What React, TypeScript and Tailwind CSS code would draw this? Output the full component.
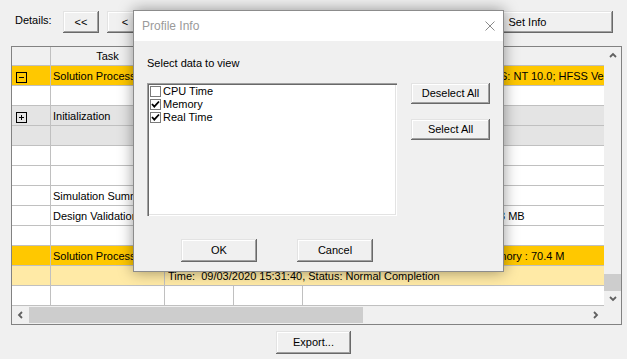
import type { ReactNode } from 'react'

const BTN =
  'flex items-center justify-center bg-[#f0f0f0] text-black shadow-[inset_-1px_-1px_#696969,inset_1px_1px_#e3e3e3,inset_-2px_-2px_#a0a0a0,inset_2px_2px_#ffffff]'

function Chevron({ dir }: { dir: 'up' | 'down' | 'left' | 'right' }) {
  const pts: Record<string, string> = {
    up: '1,5 4,2 7,5',
    down: '1,2 4,5 7,2',
    left: '5,1 2,4 5,7',
    right: '2,1 5,4 2,7',
  }
  return (
    <svg width="8" height="8" viewBox="0 0 8 8">
      <polyline points={pts[dir]} fill="none" stroke="#606060" strokeWidth="1.8" />
    </svg>
  )
}

function TreeBox({ plus }: { plus?: boolean }) {
  return (
    <svg width="11" height="11" viewBox="0 0 11 11" className="ml-[4px] mt-[6px]">
      <rect x="0.5" y="0.5" width="10" height="10" fill="none" stroke="#000" />
      <line x1="3" y1="5.5" x2="8" y2="5.5" stroke="#000" />
      {plus && <line x1="5.5" y1="3" x2="5.5" y2="8" stroke="#000" />}
    </svg>
  )
}

type Row = {
  bg: string
  box?: 'plus' | 'minus'
  task?: string
  // text spanning the right columns; pre = part hidden under the dialog
  pre?: string
  preW?: string
  text?: string
}

const ROWS: Row[] = [
  { bg: 'bg-[#ffc800]', box: 'minus', task: 'Solution Process', pre: 'Host: LOCALHOST, Cores: 4, Distributed: No, O', preW: 'w-[332px]', text: 'S: NT 10.0; HFSS Version 2020.1.0' },
  { bg: 'bg-white' },
  { bg: 'bg-[#e4e4e4]', box: 'plus', task: 'Initialization' },
  { bg: 'bg-[#e4e4e4]' },
  { bg: 'bg-white' },
  { bg: 'bg-white' },
  { bg: 'bg-white', task: 'Simulation Summary' },
  { bg: 'bg-white', task: 'Design Validation', pre: 'Elapsed Time: 00:00:01, Memory: 35.', preW: 'w-[331px]', text: '3 MB' },
  { bg: 'bg-white' },
  { bg: 'bg-[#ffc800]', task: 'Solution Process', pre: 'Elapsed Time: 00:01:12, Total', preW: 'w-[314px]', text: 'Memory : 70.4 M' },
  { bg: 'bg-[#ffeaa6]', text: 'Time:  09/03/2020 15:31:40, Status: Normal Completion' },
  { bg: 'bg-white' },
]

function GridRow({ row }: { row: Row }) {
  const merged = row.text !== undefined
  return (
    <div className={`flex h-[20px] shrink-0 border-b border-[#c0c0c0] leading-[21px] ${row.bg}`}>
      <div className="w-[39px] shrink-0 border-r border-[#c0c0c0]">{row.box && <TreeBox plus={row.box === 'plus'} />}</div>
      <div className="w-[114px] shrink-0 overflow-hidden whitespace-nowrap border-r border-[#c0c0c0] pl-[2px]">{row.task}</div>
      {merged ? (
        <div className="flex flex-1 overflow-hidden whitespace-pre pl-[3px]">
          {row.pre && <span className={`shrink-0 overflow-hidden ${row.preW}`}>{row.pre}</span>}
          <span>{row.text}</span>
        </div>
      ) : (
        <>
          <div className="w-[69px] shrink-0 border-r border-[#c0c0c0]" />
          <div className="w-[69px] shrink-0 border-r border-[#c0c0c0]" />
          <div className="flex-1" />
        </>
      )}
    </div>
  )
}

function Check({ on, label }: { on?: boolean; label: string }) {
  return (
    <div className="flex h-[13px] items-center">
      <span className="flex h-[11px] w-[11px] items-center justify-center border border-[#7a7a7a] bg-white">
        {on && (
          <svg width="9" height="9" viewBox="0 0 9 9">
            <polyline points="1,4 3.3,6.6 8,1.5" fill="none" stroke="#000" strokeWidth="1.8" />
          </svg>
        )}
      </span>
      <span className="ml-[2px]">{label}</span>
    </div>
  )
}

function Btn({ className, children }: { className: string; children: ReactNode }) {
  return <div className={`${BTN} ${className}`}>{children}</div>
}

export default function App() {
  return (
    <div className="relative h-[359px] w-[627px] overflow-hidden bg-[#f0f0f0] font-[Liberation_Sans,Arial,sans-serif] text-[11px] leading-[13px] text-black">
      {/* toolbar */}
      <div className="flex h-[33px] items-start pt-[11px]">
        <span className="ml-[15px] mt-[3px] w-[48px]">Details:</span>
        <Btn className="h-[22px] w-[36px]">&lt;&lt;</Btn>
        <Btn className="ml-[8px] h-[22px] w-[36px]">&lt;</Btn>
        <Btn className="ml-[8px] h-[22px] w-[36px]">&gt;</Btn>
        <Btn className="ml-[8px] h-[22px] w-[36px]">&gt;&gt;</Btn>
        <Btn className="ml-auto mr-[14px] h-[22px] w-[171px]">Set Info</Btn>
      </div>

      {/* grid */}
      <div className="ml-[11px] mt-[13px] flex h-[279px] w-[611px] border border-[#828282]">
        <div className="flex w-[592px] flex-col">
          <div className="flex h-[259px] flex-col overflow-hidden bg-white">
            <div className="flex h-[19px] shrink-0 border-b border-[#c0c0c0] bg-[#f0f0f0] leading-[19px]">
              <div className="w-[39px] shrink-0 border-r border-[#c0c0c0]" />
              <div className="w-[114px] shrink-0 border-r border-[#c0c0c0] text-center">Task</div>
              <div className="w-[69px] shrink-0 border-r border-[#c0c0c0] text-center">Time</div>
              <div className="w-[69px] shrink-0 border-r border-[#c0c0c0] text-center">Memory</div>
              <div className="flex-1" />
            </div>
            {ROWS.map((r, i) => (
              <GridRow key={i} row={r} />
            ))}
          </div>
          <div className="flex h-[18px] bg-[#f0f0f0]">
            <div className="flex w-[17px] items-center justify-center"><Chevron dir="left" /></div>
            <div className="my-[1px] w-[334px] bg-[#cdcdcd]" />
            <div className="flex-1" />
            <div className="flex w-[17px] items-center justify-center"><Chevron dir="right" /></div>
          </div>
        </div>
        <div className="flex w-[17px] flex-col bg-[#f0f0f0]">
          <div className="flex h-[17px] items-center justify-center"><Chevron dir="up" /></div>
          <div className="flex-1" />
          <div className="h-[17px] bg-[#cdcdcd]" />
          <div className="flex h-[15px] items-center justify-center"><Chevron dir="down" /></div>
          <div className="h-[18px]" />
        </div>
      </div>

      <div className="mt-[6px] flex justify-center">
        <Btn className="h-[23px] w-[75px]">Export...</Btn>
      </div>

      {/* Profile Info dialog */}
      <div className="absolute left-[133px] top-[10px] flex h-[262px] w-[371px] flex-col border border-[#8c8c8c] bg-[#f0f0f0] shadow-[0_0_14px_rgba(0,0,0,0.4)]">
        <div className="flex h-[30px] shrink-0 items-center justify-between bg-white pl-[8px] pr-[8px]">
          <span className="text-[12px] text-[#9a9a9a]">Profile Info</span>
          <svg width="10" height="10" viewBox="0 0 10 10">
            <line x1="0.5" y1="0.5" x2="9.5" y2="9.5" stroke="#8a8a8a" />
            <line x1="9.5" y1="0.5" x2="0.5" y2="9.5" stroke="#8a8a8a" />
          </svg>
        </div>
        <div className="flex flex-1 flex-col px-[13px]">
          <div className="mt-[16px]">Select data to view</div>
          <div className="mt-[13px] flex">
            <div className="h-[133px] w-[251px] bg-white px-[3px] pt-[2px] shadow-[inset_1px_1px_#a0a0a0,inset_2px_2px_#696969,inset_-1px_-1px_#ffffff,inset_-2px_-2px_#e3e3e3]">
              <Check label="CPU Time" />
              <Check on label="Memory" />
              <Check on label="Real Time" />
            </div>
            <div className="ml-[14px] flex flex-col">
              <Btn className="h-[21px] w-[79px]">Deselect All</Btn>
              <Btn className="mt-[15px] h-[21px] w-[79px]">Select All</Btn>
            </div>
          </div>
          <div className="mt-[23px] flex">
            <Btn className="ml-[34px] h-[23px] w-[76px]">OK</Btn>
            <Btn className="ml-[40px] h-[23px] w-[76px]">Cancel</Btn>
          </div>
        </div>
      </div>
    </div>
  )
}
